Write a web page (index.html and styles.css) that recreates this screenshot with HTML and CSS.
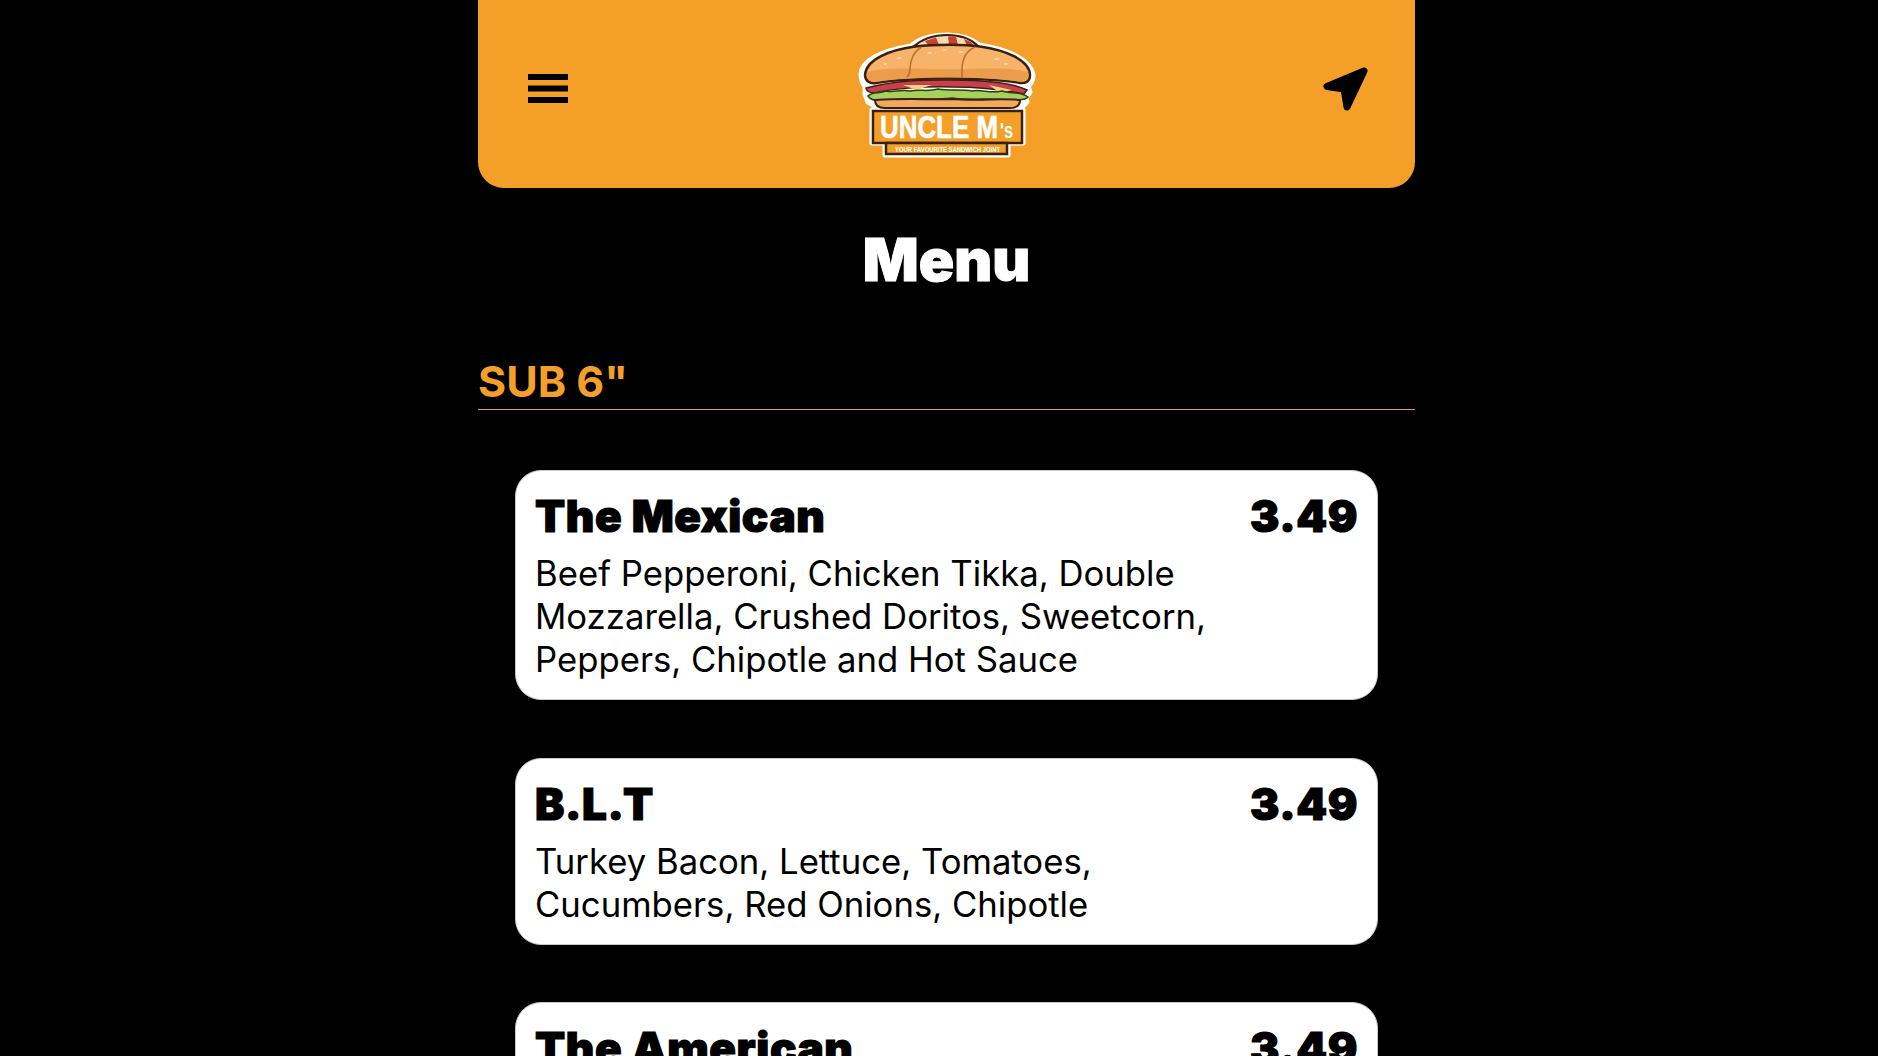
FILE: index.html
```html
<!DOCTYPE html>
<html lang="en">
<head>
<meta charset="utf-8">
<title>Uncle M's Menu</title>
<link rel="stylesheet" href="styles.css">
</head>
<body>
<div class="page">
  <header class="topbar">
    <svg class="burger" viewBox="0 0 40 29" aria-hidden="true">
      <rect x="0" y="0" width="40" height="6"/>
      <rect x="0" y="11.500" width="40" height="6"/>
      <rect x="0" y="23" width="40" height="6"/>
    </svg>
    <svg class="logo" viewBox="0 0 200 160" aria-hidden="true">
      <path class="lg-halo" d="M21 64C22 50 42 41 71 36C80 28 94 25 107 25C120 25 131 28 139 35C166 39 190 49 193 65C193 71 191 74 188 76L190 82L186 88L187 92L182 97V100H183V133H168V145H45V133H32V100H35V96L28 92L25 84L25 76C22 73 21 69 21 64Z"/>
      <path class="lg-pick" d="M73 37C82 29 95 25 107 25C120 25 131 29 138 36Z"/>
      <path class="lg-stripe" d="M85 31L96 27.500L99 35H88ZM108 26.500H116L118 35H109ZM124 29L131 32L134 36H127Z"/>
      <path class="lg-bun" d="M25 65C26 49 50 40 75 36.500C95 34 125 34 140 36.500C165 40 190 50 190 65C190 72 185 74 178 72.500C140 67 70 67 36 73C30 74 25 71 25 65Z"/>
      <path class="lg-shade" d="M27 62C50 56 80 60 107 59C135 60 165 56 188 62C190 70 185 73 178 71.500C140 66 70 66 36 72C30 73 26 69 27 62Z"/>
      <path class="lg-seam" d="M82 37C74 41 70 50 70 59M135 37C126 41 122 50 122 60M70 59C70 63 69 65 67 67M122 60V67"/>
      <path class="lg-dots" d="M88 43h3M120 42h3M104 40h2M155 49h3M58 48h3M165 54h2M44 54h2"/>
      <path class="lg-meat" d="M26 78C60 69 90 70 112 70C140 70 170 72 187 80L184 84C160 79 130 77 112 77C85 76 50 79 34 83C30 83 26 81 26 78Z"/>
      <path class="lg-cheese" d="M63 75H92L76 80ZM149 75L172 80L160 83Z"/>
      <path class="lg-lettuce" d="M28 86C32 81 40 84 46 81C54 83 60 79 70 81C80 79 88 82 98 79C110 81 122 79 132 81C142 79 150 84 162 81C170 84 180 81 188 87C184 92 176 88 170 91C150 87 130 91 112 88C90 91 70 87 50 90C42 91 32 92 28 86Z"/>
      <path class="lg-base" d="M35 90C70 88 90 90 112 89C140 91 160 88 180 90C180 96 176 98 170 98H45C39 98 35 96 35 90Z"/>
      <rect class="lg-plate" x="33" y="101" width="149" height="32"/>
      <rect class="lg-plate" x="46" y="133" width="121" height="11"/>
      <text class="lg-name" x="40" y="127.500" textLength="118" lengthAdjust="spacingAndGlyphs">UNCLE M</text>
      <text class="lg-small" x="160" y="127.500" textLength="13" lengthAdjust="spacingAndGlyphs">'s</text>
      <text class="lg-tag" x="55" y="141.500" textLength="105" lengthAdjust="spacingAndGlyphs">YOUR FAVOURITE SANDWICH JOINT</text>
    </svg>
    <svg class="nav" viewBox="0 0 46 46" aria-hidden="true">
      <path d="M41 5L4 20.500L21 23L24 41Z"/>
    </svg>
  </header>

  <h1 class="title">Menu</h1>

  <section class="section">
    <h2 class="section-name">SUB 6"</h2>
    <div class="items">
      <article class="card">
        <div class="card-head"><span>The Mexican</span><span>3.49</span></div>
        <p class="card-desc">Beef Pepperoni, Chicken Tikka, Double Mozzarella, Crushed Doritos, Sweetcorn, Peppers, Chipotle and Hot Sauce</p>
      </article>
      <article class="card">
        <div class="card-head"><span>B.L.T</span><span>3.49</span></div>
        <p class="card-desc">Turkey Bacon, Lettuce, Tomatoes, Cucumbers, Red Onions, Chipotle</p>
      </article>
      <article class="card">
        <div class="card-head"><span>The American</span><span>3.49</span></div>
      </article>
    </div>
  </section>
</div>
</body>
</html>
```
FILE: styles.css
```css
html, body { margin: 0; height: 100%; background: #000; overflow: hidden; }
body { font-family: "Inter", "Liberation Sans", sans-serif; color: #000; }
.page { width: 937px; margin-left: 478px; }
.topbar { height: 188px; box-sizing: border-box; background: #f4a028; border-radius: 0 0 26px 26px; display: flex; align-items: center; justify-content: space-between; padding: 0 46px 11px 50px; position: relative; }
.burger { width: 40px; height: 29px; }
.nav { width: 46px; height: 46px; fill: #000; stroke: #000; stroke-width: 7; stroke-linejoin: round; }
.logo { width: 200px; height: 160px; position: absolute; left: 362px; top: 10px; }
.lg-halo { fill: #fff; stroke: #fff; stroke-width: 5; stroke-linejoin: round; }
.lg-pick { fill: #f9dcb0; stroke: #3b2012; stroke-width: 2; }
.lg-stripe { fill: #c8402e; }
.lg-bun { fill: #f7b36a; stroke: #3b2012; stroke-width: 2.500; }
.lg-shade { fill: #eb9c4c; }
.lg-seam { fill: none; stroke: #b86f30; stroke-width: 1.500; }
.lg-dots { fill: none; stroke: #fbe2bd; stroke-width: 1.500; stroke-linecap: round; }
.lg-meat { fill: #c9404a; stroke: #3b2012; stroke-width: 1.500; }
.lg-cheese { fill: #f8cf7a; }
.lg-lettuce { fill: #a6d25c; stroke: #2e3d12; stroke-width: 1.500; }
.lg-base { fill: #f4a85c; stroke: #3b2012; stroke-width: 2; }
.lg-plate { fill: #f4a028; stroke: #3b2012; stroke-width: 2.500; }
.lg-name { font: 700 31px "Liberation Sans", sans-serif; fill: #fff; stroke: #fff; stroke-width: .6px; }
.lg-small { font: 700 22px "Liberation Sans", sans-serif; fill: #fff; }
.lg-tag { font: 700 6.500px "Liberation Sans", sans-serif; fill: #fff; }
.title { margin: 33px 0 0; color: #fff; font-size: 58.500px; line-height: 78px; font-weight: 900; text-align: center; -webkit-text-stroke: 1px #fff; }
.section { margin-top: 57px; }
.section-name { margin: 0; color: #f4a028; font-size: 43px; line-height: 51px; font-weight: 700; border-bottom: 1px solid #d89c6a; padding-bottom: 2px; }
.items { padding: 60px 37px 0; display: flex; flex-direction: column; gap: 57.500px; }
.card { background: #fff; border: 1px solid #c8c8c8; border-radius: 26px; padding: 20px 19px 18px; }
.card-head { display: flex; justify-content: space-between; font-size: 44px; line-height: 50px; font-weight: 900; letter-spacing: .6px; -webkit-text-stroke: 1.2px #000; }
.card-desc { margin: 11px 120px 0 0; font-size: 34.700px; line-height: 43px; font-weight: 400; }
```
